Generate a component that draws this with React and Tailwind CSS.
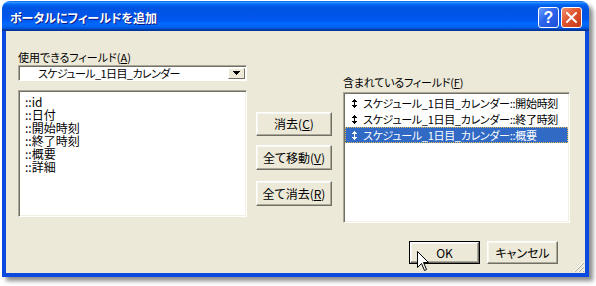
import React from "react";

const FONT = "font-['Noto_Sans_CJK_JP','Noto_Sans_CJK_SC',sans-serif] [font-feature-settings:'palt']";

function OrderIcon({ color }) {
  return (
    <svg width="5" height="9" viewBox="0 0 5 9" shapeRendering="crispEdges" className="shrink-0">
      <path d="M2.5 0 L5 3 H0 Z" fill={color} />
      <rect x="2" y="3" width="1" height="3" fill={color} />
      <path d="M0 6 H5 L2.5 9 Z" fill={color} />
    </svg>
  );
}

function RaisedButton({ children, className = "" }) {
  return (
    <div
      className={
        "flex items-center justify-center bg-[#ECE9D8] border border-t-white border-l-white border-r-[#716F64] border-b-[#716F64] shadow-[inset_-1px_-1px_0_#ACA899,inset_1px_1px_0_#F7F6F0] text-[12px] leading-none text-black whitespace-nowrap " +
        className
      }
    >
      {children}
    </div>
  );
}

export default function App() {
  return (
    <div className={"w-[596px] h-[286px] bg-white pl-[2px] pt-[1px] " + FONT}>
      <div className="w-[587px] h-[276px] flex flex-col rounded-t-[8px] shadow-[4px_4px_4px_rgba(0,0,0,0.45)]">
        {/* Title bar */}
        <div className="h-[30px] shrink-0 rounded-t-[8px] flex items-center pl-[8px] pr-[7px] bg-[linear-gradient(180deg,#0058EE_0%,#3593FF_4%,#288EFF_6%,#127DFF_8%,#036FFC_10%,#0262EE_14%,#0057E5_20%,#0054E3_24%,#0055EB_56%,#005BF5_66%,#026AFE_76%,#0062EF_86%,#0052D6_92%,#0040AB_94%,#003092_100%)]">
          <span className="text-white font-bold text-[12px] leading-none pt-[4px] whitespace-nowrap [text-shadow:1px_1px_0_#0A1883]">
            ポータルにフィールドを追加
          </span>
          <div className="ml-auto flex gap-[2px] mt-[2px]">
            <div className="w-[21px] h-[21px] rounded-[3px] border border-white flex items-center justify-center bg-[linear-gradient(135deg,#6A9CFB_0%,#2C64EC_45%,#1E4FD8_100%)]">
              <span className="text-white font-bold text-[16px] leading-none font-['Liberation_Sans',sans-serif] mt-[1px]">?</span>
            </div>
            <div className="w-[21px] h-[21px] rounded-[3px] border border-white flex items-center justify-center bg-[linear-gradient(135deg,#F0946F_0%,#E0552E_45%,#C53A17_100%)]">
              <svg width="11" height="11" viewBox="0 0 11 11">
                <path d="M1 1 L10 10 M10 1 L1 10" stroke="white" strokeWidth="2" strokeLinecap="square" />
              </svg>
            </div>
          </div>
        </div>

        {/* Body */}
        <div className="relative flex-1 flex flex-col bg-[#ECE9D8] border-x-4 border-b-4 border-[#0B4AE0]">
          <div className="flex items-start pl-[12px]">
            {/* Left column */}
            <div className="w-[229px] mt-[19px] flex flex-col">
              <div className="h-[14px] text-[11px] leading-[14px] text-black whitespace-nowrap">
                使用できるフィールド(<span className="underline">A</span>)
              </div>
              <div className="mt-[1px] h-[16px] bg-white border border-t-[#ACA899] border-l-[#ACA899] border-b-white border-r-white shadow-[inset_1px_1px_0_#716F64] flex items-center pl-[19px] pr-[1px]">
                <span className="text-[11px] leading-none text-black whitespace-nowrap tracking-[-0.6px]">スケジュール_1日目_カレンダー</span>
                <div className="ml-auto w-[17px] h-[11px] bg-[#ECE9D8] border border-t-white border-l-white border-r-[#716F64] border-b-[#716F64] flex items-center justify-center">
                  <svg width="7" height="4" viewBox="0 0 7 4" shapeRendering="crispEdges">
                    <path d="M0 0 H7 L3.5 4 Z" fill="black" />
                  </svg>
                </div>
              </div>
              <div className="mt-[9px] h-[127px] bg-white border border-t-[#ACA899] border-l-[#ACA899] border-b-white border-r-white shadow-[inset_1px_1px_0_#716F64,inset_-1px_-1px_0_#F1EFE2] pl-[6px] pt-[4px] text-[12px] leading-[13px] text-black">
                <div className="h-[13px]">::id</div>
                <div className="h-[13px]">::日付</div>
                <div className="h-[13px]">::開始時刻</div>
                <div className="h-[13px]">::終了時刻</div>
                <div className="h-[13px]">::概要</div>
                <div className="h-[13px]">::詳細</div>
              </div>
            </div>

            {/* Middle buttons */}
            <div className="ml-[9px] w-[76px] mt-[81px] flex flex-col">
              <RaisedButton className="h-[24px]">
                消去(<span className="underline">C</span>)
              </RaisedButton>
              <RaisedButton className="h-[25px] mt-[9px]">
                全て移動(<span className="underline">V</span>)
              </RaisedButton>
              <RaisedButton className="h-[25px] mt-[11px]">
                全て消去(<span className="underline">R</span>)
              </RaisedButton>
            </div>

            {/* Right column */}
            <div className="ml-[11px] w-[227px] mt-[44px] flex flex-col">
              <div className="h-[14px] text-[11px] leading-[14px] text-black whitespace-nowrap tracking-[-0.2px]">
                含まれているフィールド(<span className="underline">F</span>)
              </div>
              <div className="mt-[3px] h-[131px] bg-white border border-t-[#ACA899] border-l-[#ACA899] border-b-white border-r-white shadow-[inset_1px_1px_0_#716F64,inset_-1px_-1px_0_#F1EFE2] pt-[2px] pl-[1px] pr-[1px] text-[11px] leading-none whitespace-nowrap tracking-[-0.3px]">
                <div className="h-[16px] flex items-center pl-[7px] gap-[6px] text-black">
                  <OrderIcon color="black" />
                  <span>スケジュール_1日目_カレンダー::開始時刻</span>
                </div>
                <div className="h-[16px] flex items-center pl-[7px] gap-[6px] text-black">
                  <OrderIcon color="black" />
                  <span>スケジュール_1日目_カレンダー::終了時刻</span>
                </div>
                <div className="h-[16px] flex items-center pl-[6px] gap-[6px] text-white bg-[#316AC5] border border-dotted border-[#E0B850]">
                  <OrderIcon color="white" />
                  <span>スケジュール_1日目_カレンダー::概要</span>
                </div>
              </div>
            </div>
          </div>

          {/* Bottom buttons */}
          <div className="flex justify-end gap-[7px] pr-[27px] mt-[18px]">
            <div className="w-[71px] h-[23px] border border-black">
              <RaisedButton className="w-full h-full">OK</RaisedButton>
            </div>
            <RaisedButton className="w-[71px] h-[23px]">キャンセル</RaisedButton>
          </div>

          {/* Resize grip */}
          <svg className="absolute right-[0px] bottom-[0px]" width="12" height="12" viewBox="0 0 12 12" shapeRendering="crispEdges">
            <path d="M11 1 L1 11" stroke="#FFFFFF" strokeWidth="1" />
            <path d="M11 2 L2 11" stroke="#ACA899" strokeWidth="1" />
            <path d="M11 5 L5 11" stroke="#FFFFFF" strokeWidth="1" />
            <path d="M11 6 L6 11" stroke="#ACA899" strokeWidth="1" />
            <path d="M11 9 L9 11" stroke="#FFFFFF" strokeWidth="1" />
            <path d="M11 10 L10 11" stroke="#ACA899" strokeWidth="1" />
          </svg>

          {/* Mouse cursor */}
          <svg className="absolute left-[410px] top-[219px]" width="14" height="22" viewBox="0 0 14 22">
            <path
              d="M1.5 1.5 L1.5 17.5 L5.5 13.5 L8.5 20.5 L10.5 19.5 L7.5 12.5 L12.5 12.5 Z"
              fill="white"
              stroke="black"
              strokeWidth="1"
              strokeLinejoin="miter"
            />
          </svg>
        </div>
      </div>
    </div>
  );
}
